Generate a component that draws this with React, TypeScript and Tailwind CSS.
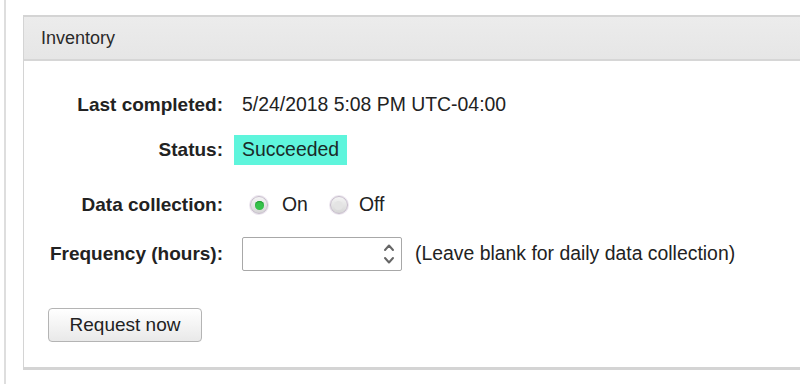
import React from 'react';

const font = { fontFamily: '"Liberation Sans", Arial, sans-serif' };

function Radio({ checked }: { checked: boolean }) {
  return (
    <span className="flex h-[18px] w-[18px] items-center justify-center rounded-full border border-[#c6bccb] bg-gradient-to-b from-[#f4f4f4] to-[#d6d6d6] shadow-[0_0_0_1px_#ece6ef]">
      {checked ? (
        <span className="h-[9px] w-[9px] rounded-full bg-[#36c24a] shadow-[inset_0_1px_1px_#1f9a30]" />
      ) : (
        <span className="h-[9px] w-[9px] rounded-full bg-[#e4e4e4]" />
      )}
    </span>
  );
}

function Spinner() {
  return (
    <svg width="12" height="26" viewBox="0 0 12 26" className="text-[#666]">
      <path d="M2 9 L6 4.5 L10 9" fill="none" stroke="currentColor" strokeWidth="2" strokeLinecap="round" strokeLinejoin="round" />
      <path d="M2 17 L6 21.5 L10 17" fill="none" stroke="currentColor" strokeWidth="2" strokeLinecap="round" strokeLinejoin="round" />
    </svg>
  );
}

export default function App() {
  return (
    <div className="h-[384px] w-[800px] overflow-hidden bg-white pl-1 text-[19.4px] text-[#222]" style={font}>
      <div className="h-full border-l-2 border-[#dedede] pl-[17px] pt-[15px]">
        <div className="w-[820px] border-l border-t-2 border-b-[3px] border-[#d4d4d4]">
          <div className="flex h-[44px] items-center border-b-2 border-[#d6d6d6] bg-gradient-to-b from-[#ececec] to-[#e6e6e6] pl-[17px] text-[18px] text-[#2a2a2a]">
            Inventory
          </div>
          <div className="h-[306px] pt-[29px]">
            <div className="ml-[25px] grid grid-cols-[174px_1fr] gap-x-[19px]">
              <div className="flex h-[30px] items-center justify-end text-[19px] font-bold">Last completed:</div>
              <div className="flex h-[30px] items-center">5/24/2018 5:08 PM UTC-04:00</div>

              <div className="mt-[15px] flex h-[30px] items-center justify-end text-[19px] font-bold">Status:</div>
              <div className="mt-[15px] flex h-[30px] items-center">
                <span className="-ml-2 flex h-[30px] items-center bg-[#5ef5dc] px-2 text-[#1a2a28]">Succeeded</span>
              </div>

              <div className="mt-[25px] flex h-[30px] items-center justify-end text-[19px] font-bold">Data collection:</div>
              <div className="mt-[25px] flex h-[30px] items-center pl-2">
                <Radio checked />
                <span className="ml-[14px]">On</span>
                <span className="ml-[22px]"><Radio checked={false} /></span>
                <span className="ml-[11px]">Off</span>
              </div>

              <div className="mt-[17px] flex h-[34px] items-center justify-end text-[19px] font-bold">Frequency (hours):</div>
              <div className="mt-[17px] flex h-[34px] items-center">
                <div className="flex h-[34px] w-[160px] items-center justify-end rounded-[2px] border border-[#a8a8a8] pr-[6px]">
                  <Spinner />
                </div>
                <span className="ml-[13px]">(Leave blank for daily data collection)</span>
              </div>
            </div>
            <button className="ml-[24px] mt-[37px] h-[34px] w-[154px] rounded-[4px] border border-[#b4b4b4] bg-gradient-to-b from-white to-[#e9e9e9] text-[19px] text-[#222]">
              Request now
            </button>
          </div>
        </div>
      </div>
    </div>
  );
}
